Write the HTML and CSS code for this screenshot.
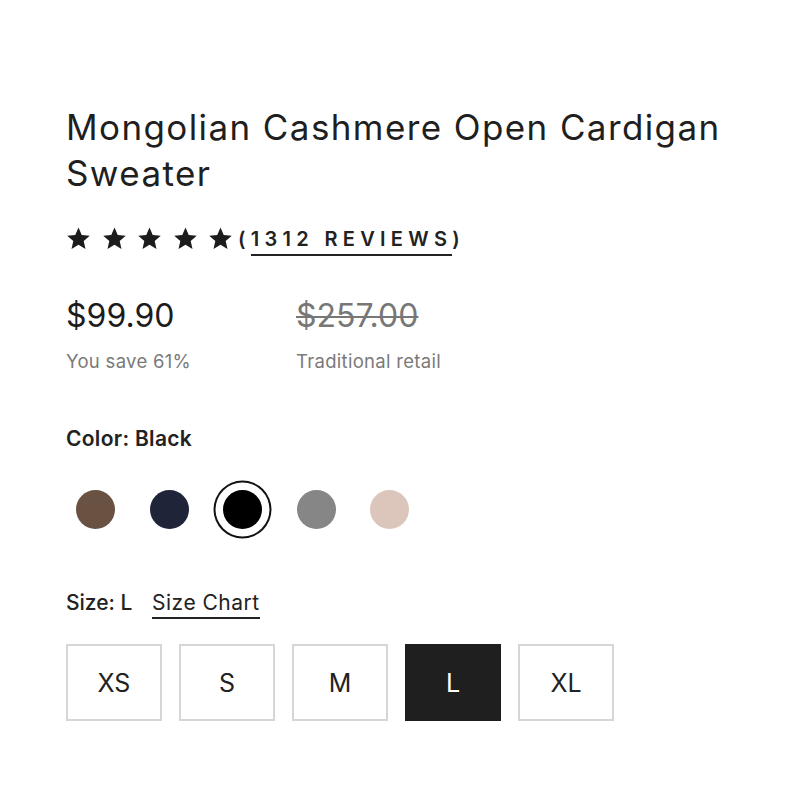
FILE: index.html
```html
<!DOCTYPE html>
<html lang="en">
<head>
  <meta charset="UTF-8">
  <title>Mongolian Cashmere Open Cardigan Sweater</title>
  <meta name="viewport" content="width=device-width, initial-scale=1.0">
  <link rel="stylesheet" href="styles.css">
</head>
<body>
  <div class="product">
    <h1 class="title">Mongolian Cashmere Open Cardigan Sweater</h1>

    <div class="rating">
      <div class="stars">
        <svg viewBox="0 0 24 24"><path d="M12 1.5l3.1 7.1 7.7.7-5.8 5.1 1.7 7.6L12 18l-6.7 4 1.7-7.6-5.8-5.1 7.7-.7z"/></svg>
        <svg viewBox="0 0 24 24"><path d="M12 1.5l3.1 7.1 7.7.7-5.8 5.1 1.7 7.6L12 18l-6.7 4 1.7-7.6-5.8-5.1 7.7-.7z"/></svg>
        <svg viewBox="0 0 24 24"><path d="M12 1.5l3.1 7.1 7.7.7-5.8 5.1 1.7 7.6L12 18l-6.7 4 1.7-7.6-5.8-5.1 7.7-.7z"/></svg>
        <svg viewBox="0 0 24 24"><path d="M12 1.5l3.1 7.1 7.7.7-5.8 5.1 1.7 7.6L12 18l-6.7 4 1.7-7.6-5.8-5.1 7.7-.7z"/></svg>
        <svg viewBox="0 0 24 24"><path d="M12 1.5l3.1 7.1 7.7.7-5.8 5.1 1.7 7.6L12 18l-6.7 4 1.7-7.6-5.8-5.1 7.7-.7z"/></svg>
      </div>
      <a class="reviews" href="#">(<span>1312 REVIEWS</span>)</a>
    </div>

    <div class="prices">
      <div class="price">
        <div class="amount">$99.90</div>
        <div class="note">You save 61%</div>
      </div>
      <div class="price">
        <div class="amount old">$257.00</div>
        <div class="note">Traditional retail</div>
      </div>
    </div>

    <div class="label color-label">Color: Black</div>
    <div class="swatches">
      <button class="swatch" style="background:#6a5242"></button>
      <button class="swatch" style="background:#1f2438"></button>
      <button class="swatch selected" style="background:#000"></button>
      <button class="swatch" style="background:#868686"></button>
      <button class="swatch" style="background:#dcc6bb"></button>
    </div>

    <div class="label size-label">Size: L <a href="#" class="chart">Size Chart</a></div>
    <div class="sizes">
      <button class="size">XS</button>
      <button class="size">S</button>
      <button class="size">M</button>
      <button class="size active">L</button>
      <button class="size">XL</button>
    </div>
  </div>
</body>
</html>
```

FILE: styles.css
```css
* {
  box-sizing: border-box;
  margin: 0;
  padding: 0;
}

body {
  background: #fff;
  color: #222;
  font-family: Inter, "Liberation Sans", sans-serif;
}

.product {
  padding: 104px 66px 0;
}

.title {
  font-size: 35px;
  font-weight: 400;
  line-height: 46px;
  letter-spacing: 1.4px;
  color: #1f1f1f;
}

.rating {
  display: flex;
  align-items: center;
  margin-top: 30px;
}

.stars {
  display: flex;
  gap: 10.5px;
}

.stars svg {
  width: 25px;
  height: 25px;
  fill: #1c1c1c;
}

.reviews {
  color: #222;
  text-decoration: none;
  font-size: 20px;
  font-weight: 600;
  letter-spacing: 5.3px;
  margin-left: 5px;
}

.reviews span {
  border-bottom: 2px solid #222;
  padding-bottom: 3px;
}

.prices {
  display: flex;
  margin-top: 45px;
}

.price {
  width: 230px;
}

.amount {
  font-size: 32px;
  line-height: 40px;
  color: #1c1c1c;
}

.amount.old {
  color: #777;
  text-decoration: line-through;
  text-decoration-thickness: 2px;
}

.note {
  font-size: 18.5px;
  letter-spacing: 0.3px;
  color: #7a7a7a;
  margin-top: 14px;
}

.label {
  font-size: 21px;
  color: #222;
}

.color-label {
  font-weight: 600;
  margin-top: 54px;
  letter-spacing: 0.3px;
}

.swatches {
  display: flex;
  align-items: center;
  gap: 34.5px;
  margin-top: 39px;
  padding-left: 10px;
}

.swatch {
  width: 39px;
  height: 39px;
  border-radius: 50%;
  border: none;
  cursor: pointer;
}

.swatch.selected {
  box-shadow: 0 0 0 7.5px #fff, 0 0 0 9.5px #111;
}

.size-label {
  margin-top: 61px;
  font-weight: 500;
}

.chart {
  color: #222;
  text-decoration: none;
  font-weight: 400;
  letter-spacing: 0.5px;
  margin-left: 14px;
  border-bottom: 2px solid #222;
  padding-bottom: 2px;
}

.sizes {
  display: flex;
  gap: 17px;
  margin-top: 29px;
}

.size {
  width: 96px;
  height: 77px;
  background: #fff;
  border: 2px solid #d6d6d6;
  font-family: inherit;
  font-size: 25px;
  color: #222;
  cursor: pointer;
}

.size.active {
  background: #1f1f1f;
  border-color: #1f1f1f;
  color: #fff;
}
```
